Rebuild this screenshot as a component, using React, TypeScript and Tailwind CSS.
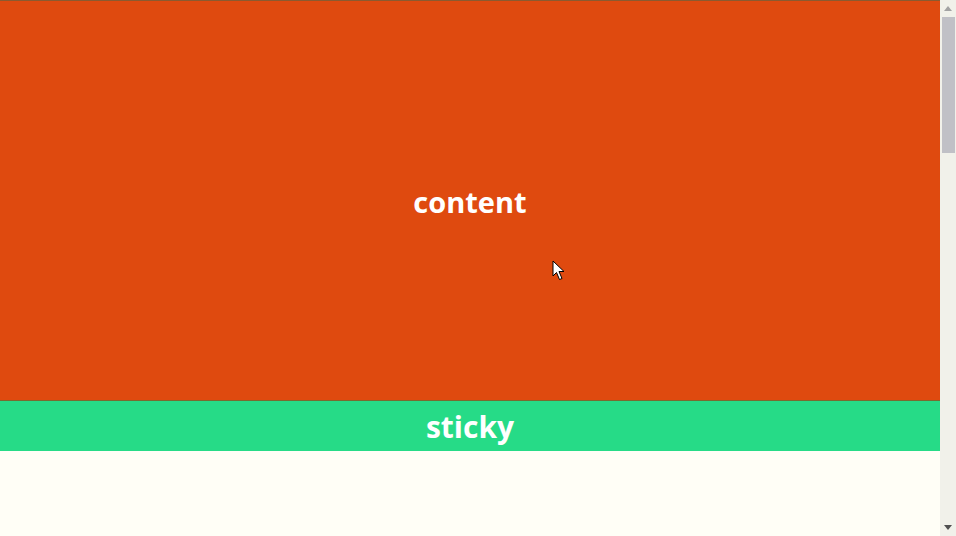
import React from "react";

export default function App() {
  return (
    <div className="flex h-[536px] w-[956px] overflow-hidden bg-[#fffef6]" style={{ fontFamily: '"Open Sans", "Noto Sans", sans-serif' }}>
      <div className="flex w-[940px] flex-col">
        <div className="h-px bg-[#8a5a30]" />
        <div className="flex h-[399px] items-center justify-center bg-[#df4a0f]">
          <span className="relative top-px text-[29px] font-bold leading-none text-white">content</span>
        </div>
        <div className="h-px bg-[#7a6a30]" />
        <div className="flex h-[50px] items-center justify-center bg-[#26db87]">
          <span className="relative top-[1px] text-[30px] font-bold leading-none text-white">sticky</span>
        </div>
        <div className="flex-1 bg-[#fffef6]" />
      </div>
      <div className="relative flex w-[16px] flex-col items-center bg-[#f1f1ea]">
        <div className="flex h-[17px] w-full items-center justify-center">
          <svg width="8" height="5" viewBox="0 0 8 5"><path d="M0 5 L4 0 L8 5 Z" fill="#a3a3a3" /></svg>
        </div>
        <div className="h-[136px] w-[13px] bg-[#c0c0c6]" />
        <div className="flex-1" />
        <div className="flex h-[17px] w-full items-center justify-center">
          <svg width="8" height="5" viewBox="0 0 8 5"><path d="M0 0 L8 0 L4 5 Z" fill="#505050" /></svg>
        </div>
      </div>
      <svg className="absolute left-[552px] top-[260px]" width="14" height="22" viewBox="0 0 14 22">
        <path d="M1 1 L1 16 L4.5 12.5 L7.5 19.5 L10 18.5 L7 11.5 L12 11.5 Z" fill="white" stroke="black" strokeWidth="1" strokeLinejoin="miter" />
      </svg>
    </div>
  );
}
